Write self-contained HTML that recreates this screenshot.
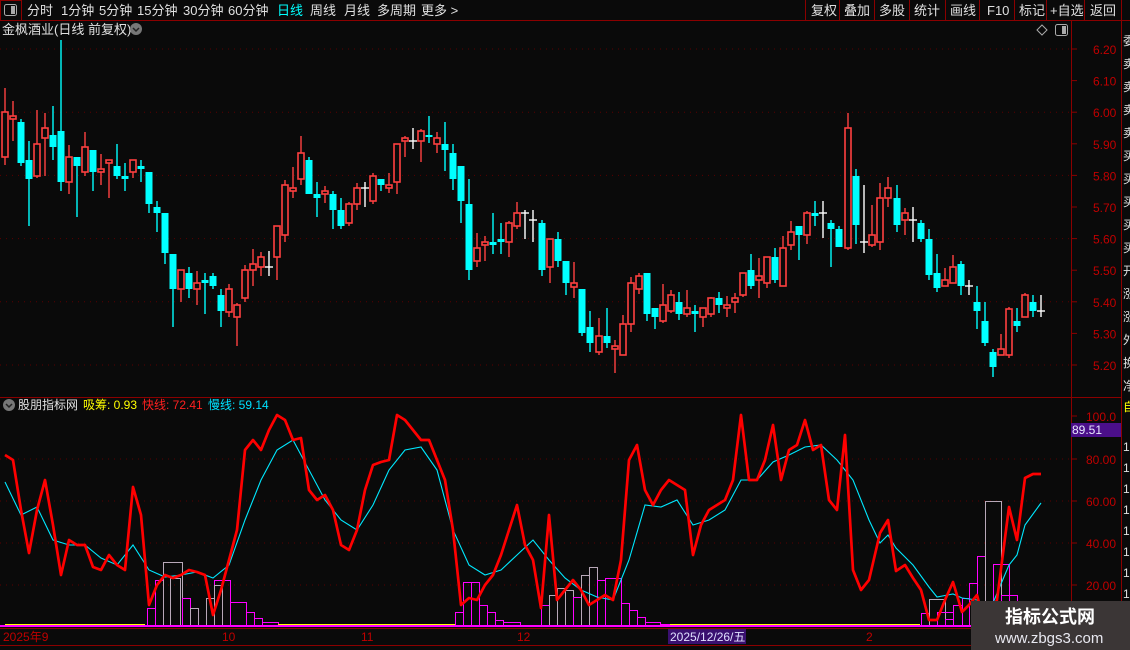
<!DOCTYPE html>
<html><head><meta charset="utf-8"><style>
html,body{margin:0;padding:0;background:#0a0a0a;width:1130px;height:650px;overflow:hidden;font-family:"Liberation Sans","Noto Sans CJK SC",sans-serif}
svg{position:absolute;left:0;top:0}
</style></head><body>
<svg id="s" width="1130" height="650" xmlns="http://www.w3.org/2000/svg" font-family="Liberation Sans, Noto Sans CJK SC, sans-serif">
<rect width="1130" height="650" fill="#0a0a0a"/>
<line x1="0" y1="20.5" x2="1130" y2="20.5" stroke="#8b0000"/>
<rect x="0.5" y="0.5" width="21" height="20" fill="none" stroke="#8b0000"/>
<rect x="4.5" y="4.5" width="12" height="11" rx="2" fill="none" stroke="#aaa"/>
<rect x="11" y="6" width="4" height="8" fill="#aaa"/>
<g font-size="13" fill="#e0e0e0">
<text x="27" y="15">分时</text><text x="61" y="15">1分钟</text><text x="99" y="15">5分钟</text><text x="137" y="15">15分钟</text><text x="183" y="15">30分钟</text><text x="228" y="15">60分钟</text>
<text x="277" y="15" fill="#00ffff">日线</text><text x="310" y="15">周线</text><text x="344" y="15">月线</text><text x="377" y="15">多周期</text><text x="421" y="15">更多 &gt;</text>
<text x="811" y="15">复权</text><text x="844" y="15">叠加</text><text x="879" y="15">多股</text><text x="914" y="15">统计</text><text x="950" y="15">画线</text><text x="987" y="15">F10</text><text x="1019" y="15">标记</text><text x="1050" y="15">+自选</text><text x="1090" y="15">返回</text>
</g>
<g stroke="#8b0000"><line x1="805.5" y1="0" x2="805.5" y2="20"/><line x1="839.5" y1="0" x2="839.5" y2="20"/><line x1="874.5" y1="0" x2="874.5" y2="20"/><line x1="909.5" y1="0" x2="909.5" y2="20"/><line x1="945.5" y1="0" x2="945.5" y2="20"/><line x1="979.5" y1="0" x2="979.5" y2="20"/><line x1="1014.5" y1="0" x2="1014.5" y2="20"/><line x1="1046.5" y1="0" x2="1046.5" y2="20"/><line x1="1084.5" y1="0" x2="1084.5" y2="20"/><line x1="1121.5" y1="0" x2="1121.5" y2="20"/></g>
<text x="2" y="34" font-size="13" fill="#e0e0e0">金枫酒业(日线 前复权)</text>
<circle cx="136" cy="29" r="6" fill="#777"/><path d="M133 28l3 3 3-3" stroke="#222" stroke-width="1.5" fill="none"/>
<path d="M1042 25l5 5-5 5-5-5z" fill="none" stroke="#aaa"/>
<rect x="1055.5" y="24.5" width="12" height="11" rx="2" fill="none" stroke="#aaa"/><rect x="1062" y="26" width="4" height="8" fill="#aaa"/>
<line x1="1071.5" y1="20" x2="1071.5" y2="650" stroke="#8b0000"/>
<line x1="1121.5" y1="20" x2="1121.5" y2="650" stroke="#8b0000"/>
<line x1="0" y1="397.5" x2="1121" y2="397.5" stroke="#8b0000"/>
<line x1="0" y1="628.5" x2="1071" y2="628.5" stroke="#8b0000"/>
<line x1="0" y1="645.5" x2="1071" y2="645.5" stroke="#8b0000"/>
<g id="grid"></g>
<g id="plot"></g>
<circle cx="9" cy="405" r="6" fill="#777"/><path d="M6 404l3 3 3-3" stroke="#222" stroke-width="1.5" fill="none"/>
<g font-size="12">
<text x="18" y="409" fill="#e0e0e0">股朋指标网</text>
<text x="83" y="409" fill="#ffff00">吸筹: 0.93</text>
<text x="142" y="409" fill="#ff2020">快线: 72.41</text>
<text x="208" y="409" fill="#00e0ff">慢线: 59.14</text>
</g>
<rect x="1071" y="423" width="50" height="14" fill="#4b0f8a"/>
<text x="1072" y="434" font-size="12" fill="#e8e8ff">89.51</text>
<g font-size="12" fill="#c00000">
<text x="3" y="641">2025年9</text><text x="222" y="641">10</text><text x="361" y="641">11</text><text x="517" y="641">12</text><text x="866" y="641">2</text>
</g>
<rect x="668" y="629" width="78" height="15" fill="#3a1070"/>
<text x="670" y="641" font-size="12" fill="#e0e0ff">2025/12/26/五</text>
<g font-size="12" fill="#e0e0e0" id="strip"></g>
<rect x="1122" y="398" width="8" height="18" fill="#0a0a0a"/>
<text x="1123" y="411" font-size="12" fill="#ffff00">自</text>
<rect x="971" y="601" width="159" height="49" fill="#3b3636"/>
<text x="1005" y="623" font-size="18" font-weight="bold" fill="#fff">指标公式网</text>
<text x="995" y="643" font-size="15" fill="#e8e8f0">www.zbgs3.com</text>
</svg>
<script>
var NS="http://www.w3.org/2000/svg",g=document.getElementById('grid'),p=document.getElementById('plot');
function el(t,a,par){var e=document.createElementNS(NS,t);for(var k in a)e.setAttribute(k,a[k]);(par||p).appendChild(e);return e;}
function tx(x,y,s,c,par){var e=el('text',{x:x,y:y,'font-size':12,fill:c},par);e.textContent=s;}
var pl=['6.20','6.10','6.00','5.90','5.80','5.70','5.60','5.50','5.40','5.30','5.20'];
for(var i=0;i<11;i++){var y=49+i*31.6;el('line',{x1:1071,y1:y,x2:1077,y2:y,stroke:'#8b0000'},g);tx(1093,y+5,pl[i],'#c00000',g);
 if(i%2==0)el('line',{x1:0,y1:y,x2:1071,y2:y,stroke:'#5a0000','stroke-dasharray':'1,5'},g);}
var ll=[[416,'100.0'],[459,'80.00'],[501,'60.00'],[543,'40.00'],[585,'20.00']];
ll.forEach(function(a){el('line',{x1:1071,y1:a[0],x2:1077,y2:a[0],stroke:'#8b0000'},g);tx(1086,a[0]+5,a[1],'#c00000',g);
 if(a[1]!='100.0')el('line',{x1:0,y1:a[0],x2:1071,y2:a[0],stroke:'#5a0000','stroke-dasharray':'1,5'},g);});
var C=[[5,'r',112,157,88,165],[13,'r',116,119,101,141],[21,'c',122,163,119,166],[29,'c',160,179,141,226],[37,'r',144,176,110,178],[45,'r',128,138,113,176],[53,'c',135,147,106,160],[61,'c',131,182,40,191],[69,'r',157,182,145,194],[77,'c',157,166,157,217],[85,'r',147,172,132,176],[93,'c',150,172,150,191],[101,'r',169,172,154,185],[109,'r',160,163,160,198],[117,'c',166,176,144,179],[125,'c',176,179,163,191],[133,'r',160,172,160,178],[141,'c',166,169,160,182],[149,'c',172,204,172,213],[157,'c',207,213,201,232],[165,'c',213,253,213,264],[173,'c',254,289,254,327],[181,'r',270,289,270,302],[189,'c',273,289,267,298],[197,'r',283,289,271,305],[205,'c',280,283,273,314],[213,'c',276,286,273,289],[221,'c',295,311,289,327],[229,'r',289,312,284,317],[237,'r',305,317,303,346],[245,'r',270,298,265,302],[253,'r',264,270,249,286],[261,'r',257,267,252,276],[269,'w',267,267,251,276],[277,'r',226,257,226,280],[285,'r',185,235,180,242],[293,'r',188,191,167,198],
[301,'r',153,179,136,185],[309,'c',160,194,157,194],[317,'c',194,198,182,217],[325,'r',191,194,186,203],[333,'c',194,210,191,229],[341,'c',210,226,198,229],[349,'r',204,223,202,226],[357,'r',188,204,183,210],[365,'w',188,188,182,207],[373,'r',176,201,173,204],[381,'c',179,185,179,191],[389,'r',185,188,173,193],[397,'r',144,182,144,194],[405,'r',138,141,136,157],[413,'w',141,141,128,149],[421,'r',131,141,129,162],[429,'c',135,137,116,143],[437,'r',138,144,132,153],[445,'c',144,150,122,171],[453,'c',153,179,144,190],[461,'c',166,201,166,223],[469,'c',204,270,179,280],[477,'r',248,261,233,267],[485,'r',242,245,236,261],[493,'c',242,245,213,254],[501,'c',239,242,223,254],[509,'r',223,242,221,257],[517,'r',213,226,202,229],[525,'w',213,213,210,239],[533,'w',220,220,210,242],[542,'c',223,270,220,276],[550,'r',239,267,239,283],[558,'c',239,261,232,267],[566,'c',261,283,261,295],[574,'r',283,287,262,298],[582,'c',289,333,289,336],[590,'c',327,343,311,352],
[599,'r',336,352,318,355],[607,'c',336,343,308,348],[615,'r',346,349,340,373],[623,'r',324,355,315,355],[631,'r',283,324,277,332],[639,'r',276,289,273,294],[647,'c',273,314,273,321],[655,'c',308,317,308,329],[663,'r',305,321,284,323],[671,'r',295,311,290,313],[679,'c',302,314,292,320],[687,'r',308,314,290,317],[695,'c',311,314,305,332],[703,'r',308,317,308,327],[711,'r',298,314,297,317],[719,'c',298,305,292,313],[727,'r',305,308,296,317],[735,'r',298,302,293,313],[743,'r',273,295,273,297],[751,'c',270,286,254,289],[759,'r',276,280,258,298],[767,'r',257,283,257,288],[775,'c',257,280,248,283],[783,'r',248,286,236,286],[791,'r',232,245,221,250],[799,'c',226,235,226,260],[807,'r',213,235,211,244],[815,'c',213,216,201,226],[823,'w',213,213,201,238],[831,'c',223,229,220,267],[839,'c',229,247,226,247],[848,'r',128,248,113,250],[856,'c',176,225,169,244],[864,'w',242,242,185,253],[872,'r',235,245,205,247],[880,'r',198,242,183,250],[888,'r',188,198,177,207],
[897,'c',198,225,185,232],[905,'r',213,220,208,235],[913,'w',220,220,207,242],[921,'c',223,239,220,242],[929,'c',239,275,229,280],[937,'c',273,288,254,292],[945,'r',280,286,268,286],[953,'r',267,283,255,283],[961,'c',264,286,261,295],[969,'w',286,286,280,295],[977,'c',302,311,286,329],[985,'c',321,343,302,346],[993,'c',352,367,349,377],[1001,'r',349,355,334,355],[1009,'r',309,355,307,358],[1017,'c',321,326,308,332],[1025,'r',295,317,293,317],[1033,'c',302,311,295,317],[1041,'w',311,311,295,317]];
C.forEach(function(c){var x=c[0],col=c[1]=='r'?'#ff4040':c[1]=='c'?'#00ffff':'#ffffff';
 el('line',{x1:x,y1:c[4],x2:x,y2:c[5],stroke:col,'stroke-width':1.4});
 if(c[1]=='w'){el('line',{x1:x-4,y1:c[2],x2:x+4,y2:c[2],stroke:col,'stroke-width':1.4});}
 else if(c[1]=='r'){el('rect',{x:x-3,y:c[2],width:6,height:Math.max(c[3]-c[2],2),fill:'#0a0a0a',stroke:col,'stroke-width':1.6});}
 else el('rect',{x:x-3.5,y:c[2],width:7,height:Math.max(c[3]-c[2],2),fill:col});});
var M='#ff00ff',G='#b8a8b8';
var B=[[147,155,608,M],[155,163,580,M],[163,182,562,G],[170,180,578,G],[182,190,598,M],[190,198,608,G],[206,214,598,G],[214,230,580,M],[214,222,585,G],[230,246,602,M],[246,254,612,M],[254,262,618,M],[262,278,622,M],
[455,463,612,M],[463,471,582,M],[471,479,582,M],[479,487,605,M],[487,495,612,M],[495,503,620,M],[503,520,622,M],
[541,549,605,M],[549,557,595,G],[557,565,588,G],[565,573,590,G],[573,581,597,M],[581,589,575,G],[589,597,567,G],[597,605,580,M],[605,621,578,M],[621,629,603,M],[629,637,610,M],[637,645,617,M],[645,660,622,M],[660,670,624,M],
[921,929,613,M],[929,945,599,G],[937,953,612,M],[945,953,619,M],[953,962,605,M],[962,969,598,M],[969,977,583,M],[977,985,556,M],[985,1001,501,G],[993,1009,564,M],[1001,1017,595,M]];
B.forEach(function(b){el('rect',{x:b[0]+.5,y:b[2]+.5,width:b[1]-b[0],height:626-b[2],fill:'none',stroke:b[3],'stroke-width':1});});
el('line',{x1:0,y1:626,x2:1071,y2:626,stroke:'#ff00ff','stroke-width':2});
el('line',{x1:5,y1:624.5,x2:145,y2:624.5,stroke:'#ffff00','stroke-width':1});
el('line',{x1:278,y1:624.5,x2:455,y2:624.5,stroke:'#ffff00','stroke-width':1});
el('line',{x1:670,y1:624.5,x2:920,y2:624.5,stroke:'#ffff00','stroke-width':1});
var R=[[5,455],[13,460],[21,510],[29,553],[37,510],[45,480],[53,525],[61,575],[69,540],[77,545],[85,545],[93,567],[101,570],[109,555],[117,565],[125,570],[133,487],[141,515],[149,605],[157,585],[165,575],[173,578],[181,575],[189,570],[197,572],[205,575],[213,615],[221,590],[229,560],[237,530],[245,450],[253,440],[261,450],[269,430],[277,415],[285,420],[293,440],[301,438],[309,490],[317,500],[325,495],[333,510],[341,545],[349,550],[357,530],[365,490],[373,465],[381,462],[389,460],[397,415],[405,420],[413,430],[421,440],[429,440],[437,460],[445,480],[453,530],[461,605],[469,598],[477,600],[485,585],[493,575],[501,555],[509,530],[517,505],[525,545],[533,560],[541,608],[549,515],[557,600],[565,590],[573,580],[581,590],[589,605],[597,600],[605,595],[613,600],[621,560],[629,460],[637,445],[645,490],[653,505],[661,490],[669,480],[677,485],[685,490],[693,555],[701,525],[709,510],[717,505],[725,500],[733,480],[741,415],[749,480],[757,480],[765,460],[773,425],[781,480],[789,450],[797,445],[805,420],[813,450],[821,445],[829,500],[837,510],[845,435],[853,570],[861,590],[869,580],[880,533],[888,520],[896,571],[905,565],[913,578],[921,590],[929,620],[937,620],[945,600],[953,582],[962,612],[969,605],[977,595],[984,622],[997,600],[1009,507],[1017,540],[1025,478],[1033,474],[1041,474]];
var S=[[5,482],[21,515],[37,507],[53,540],[69,545],[85,545],[101,558],[117,565],[133,545],[149,570],[165,577],[181,575],[197,572],[213,578],[229,565],[245,520],[261,480],[277,450],[293,440],[309,470],[325,500],[341,520],[357,530],[373,505],[389,470],[405,450],[421,447],[437,470],[453,530],[469,565],[485,575],[501,570],[517,555],[533,540],[549,560],[565,578],[581,590],[597,597],[613,600],[629,560],[645,505],[661,507],[677,500],[693,525],[709,520],[725,510],[741,480],[757,480],[773,462],[789,455],[805,447],[821,445],[837,460],[853,480],[869,520],[880,543],[888,535],[896,548],[913,565],[929,587],[937,597],[953,594],[962,598],[977,600],[990,610],[1009,565],[1017,555],[1025,525],[1041,503]];
function pts(a){return a.map(function(q){return q[0]+','+q[1]}).join(' ');}
el('polyline',{points:pts(S),fill:'none',stroke:'#00e8ff','stroke-width':1.1});
el('polyline',{points:pts(R),fill:'none',stroke:'#ff0000','stroke-width':2.7,'stroke-linejoin':'round'});
var st=document.getElementById('strip'),ch='委卖卖卖卖买买买买买开涨涨外换净';
for(var i=0;i<ch.length;i++){tx(1123,45+i*23,ch[i],'#e0e0e0',st);}
for(var i=0;i<10;i++)tx(1123,451+i*21,'1','#e0e0e0',st);
</script>
</body></html>
